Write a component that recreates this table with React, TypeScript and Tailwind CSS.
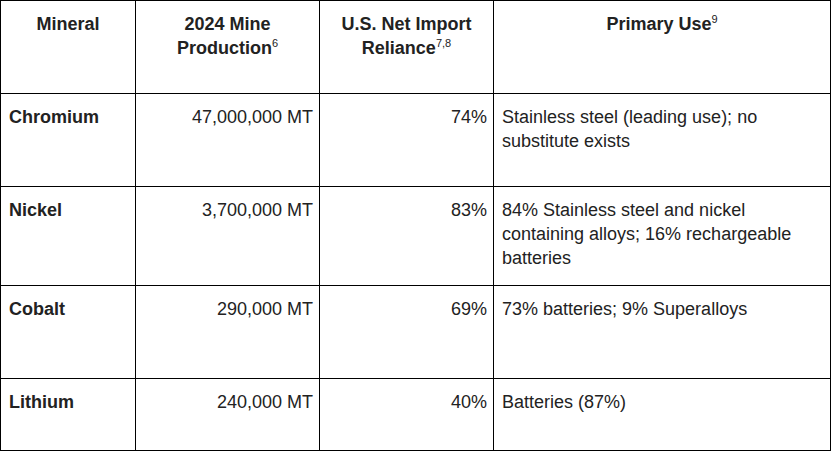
import React from 'react';

type Row = { mineral: string; production: string; reliance: string; use: string; h: string };

const rows: Row[] = [
  { mineral: 'Chromium', production: '47,000,000 MT', reliance: '74%', use: 'Stainless steel (leading use); no substitute exists', h: 'h-[92px]' },
  { mineral: 'Nickel', production: '3,700,000 MT', reliance: '83%', use: '84% Stainless steel and nickel containing alloys; 16% rechargeable batteries', h: 'h-[98px]' },
  { mineral: 'Cobalt', production: '290,000 MT', reliance: '69%', use: '73% batteries; 9% Superalloys', h: 'h-[92px]' },
  { mineral: 'Lithium', production: '240,000 MT', reliance: '40%', use: 'Batteries (87%)', h: 'h-[71px]' },
];

const cell = 'bg-white px-[8px] pt-[11px] text-[18px] leading-[24px] text-[#222]';

function Sup({ children }: { children: React.ReactNode }) {
  return <span className="text-[11px] font-normal leading-none align-[7px]">{children}</span>;
}

export default function App() {
  return (
    <div
      className="grid w-[831px] grid-cols-[134px_183px_173px_336px] gap-px border border-black bg-black"
      style={{ fontFamily: '"Liberation Sans", Arial, sans-serif' }}
    >
      <div className={`${cell} h-[92px] text-center font-bold`}>Mineral</div>
      <div className={`${cell} text-center font-bold`}>
        2024 Mine Production<Sup>6</Sup>
      </div>
      <div className={`${cell} text-center font-bold`}>
        U.S. Net Import Reliance<Sup>7,8</Sup>
      </div>
      <div className={`${cell} text-center font-bold`}>
        Primary Use<Sup>9</Sup>
      </div>

      {rows.map((r) => (
        <React.Fragment key={r.mineral}>
          <div className={`${cell} ${r.h} font-bold`}>{r.mineral}</div>
          <div className={`${cell} text-right pr-[6px]`}>{r.production}</div>
          <div className={`${cell} text-right pr-[6px]`}>{r.reliance}</div>
          <div className={cell}>{r.use}</div>
        </React.Fragment>
      ))}
    </div>
  );
}
